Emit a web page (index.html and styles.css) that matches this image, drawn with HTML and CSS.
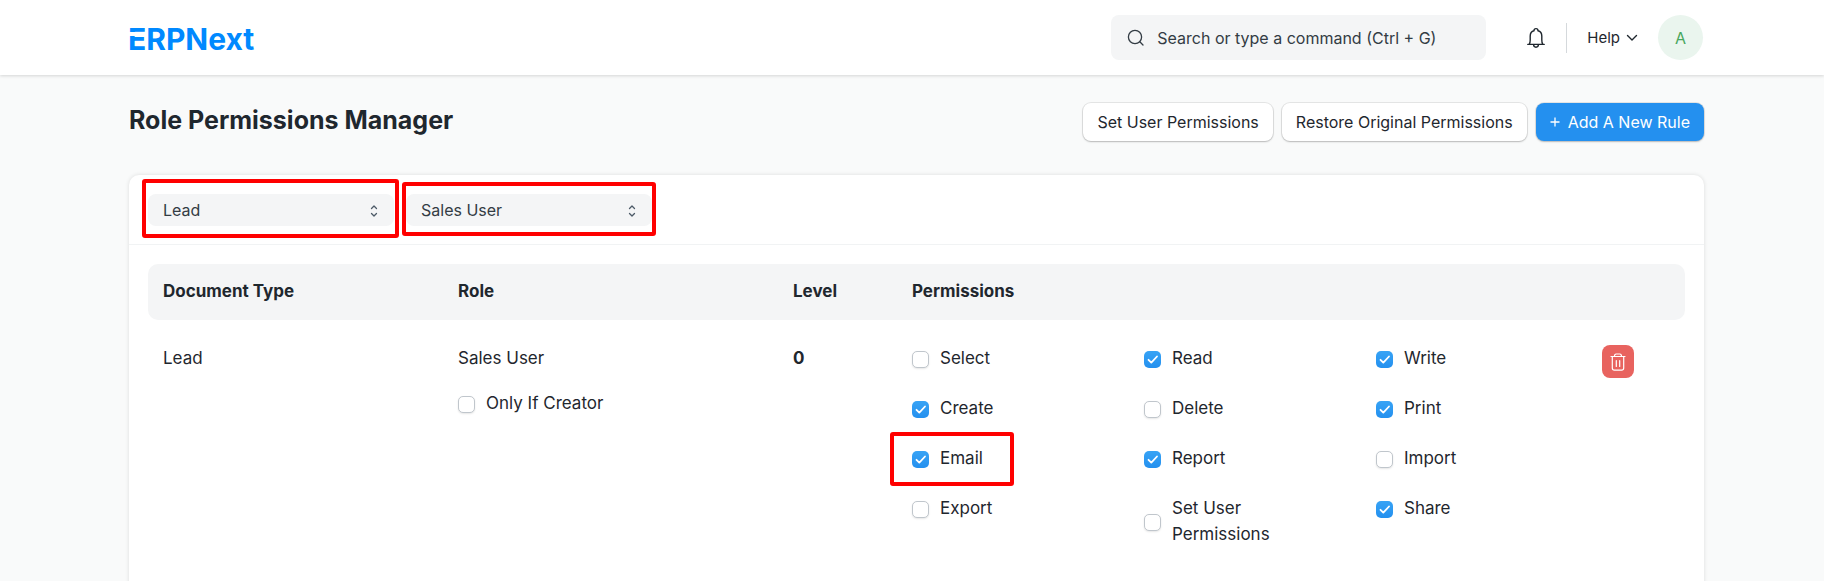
FILE: index.html
```html
<!DOCTYPE html>
<html lang="en">
<head>
    <meta charset="UTF-8">
    <meta name="viewport" content="width=device-width, initial-scale=1.0">
    <title>Role Permissions Manager</title>
    <link rel="stylesheet" href="styles.css">
</head>
<body>
    <header class="navbar">
        <a class="logo" href="#">ERPNext</a>

        <div class="navbar-right">
            <label class="search">
                <svg class="search-icon" viewBox="0 0 18 18" fill="none" stroke="currentColor" stroke-width="1.3" stroke-linecap="round">
                    <circle cx="8" cy="8" r="6.6"/>
                    <path d="M12.8 12.8L16 16"/>
                </svg>
                <input type="text" placeholder="Search or type a command (Ctrl + G)" aria-label="Search">
            </label>
            <button class="icon-button" aria-label="Notifications">
                <svg width="20" height="22" viewBox="0 0 20 22" fill="none" stroke="currentColor" stroke-width="1.4" stroke-linecap="round" stroke-linejoin="round">
                    <path d="M1.8 17.4H18.2M3.2 17.2C4 16.4 4.2 15 4.2 13V9C4.2 6.2 5.8 4.3 8 3.7C8 2.4 8.8 1.6 10 1.6S12 2.4 12 3.7C14.2 4.3 15.8 6.2 15.8 9V13C15.8 15 16 16.4 16.8 17.2"/>
                    <path d="M7.6 17.6C7.6 19.3 8.6 20.2 10 20.2S12.4 19.3 12.4 17.6"/>
                </svg>
            </button>
            <span class="divider"></span>
            <button class="help-button">
                Help
                <svg width="12" height="8" viewBox="0 0 12 8" fill="none" stroke="currentColor" stroke-width="1.4" stroke-linecap="round" stroke-linejoin="round">
                    <path d="M1.5 1.5L6 6L10.5 1.5"/>
                </svg>
            </button>
            <button class="avatar">A</button>
        </div>
    </header>

    <div class="page-head">
        <h1>Role Permissions Manager</h1>
        <div class="actions">
            <button class="btn">Set User Permissions</button>
            <button class="btn">Restore Original Permissions</button>
            <button class="btn btn-primary">
                <svg width="10" height="10" viewBox="0 0 10 10" fill="none" stroke="currentColor" stroke-width="1.3">
                    <path d="M5 0.5V9.5M0.5 5H9.5"/>
                </svg>
                Add A New Rule
            </button>
        </div>
    </div>

    <main class="card">
        <div class="filters">
            <div class="select-wrap marked">
                <select aria-label="Document Type">
                    <option>Lead</option>
                </select>
                <svg class="select-icon" viewBox="0 0 8 12" fill="none" stroke="currentColor" stroke-width="1.3" stroke-linecap="round" stroke-linejoin="round">
                    <path d="M1.5 3.5L4 1L6.5 3.5M1.5 8.5L4 11L6.5 8.5"/>
                </svg>
            </div>
            <div class="select-wrap marked marked-tight">
                <select aria-label="Role">
                    <option>Sales User</option>
                </select>
                <svg class="select-icon" viewBox="0 0 8 12" fill="none" stroke="currentColor" stroke-width="1.3" stroke-linecap="round" stroke-linejoin="round">
                    <path d="M1.5 3.5L4 1L6.5 3.5M1.5 8.5L4 11L6.5 8.5"/>
                </svg>
            </div>
        </div>

        <div class="table-area">
            <table class="rules">
                <colgroup>
                    <col class="col-doctype">
                    <col class="col-role">
                    <col class="col-level">
                    <col>
                    <col class="col-delete">
                </colgroup>
                <thead>
                    <tr>
                        <th>Document Type</th>
                        <th>Role</th>
                        <th>Level</th>
                        <th>Permissions</th>
                        <th></th>
                    </tr>
                </thead>
                <tbody>
                    <tr>
                        <td>Lead</td>
                        <td>
                            Sales User
                            <label class="check only-creator"><input type="checkbox"><span>Only If Creator</span></label>
                        </td>
                        <td class="level">0</td>
                        <td>
                            <div class="permissions">
                                <label class="check"><input type="checkbox"><span>Select</span></label>
                                <label class="check"><input type="checkbox" checked><span>Read</span></label>
                                <label class="check"><input type="checkbox" checked><span>Write</span></label>
                                <label class="check"><input type="checkbox" checked><span>Create</span></label>
                                <label class="check"><input type="checkbox"><span>Delete</span></label>
                                <label class="check"><input type="checkbox" checked><span>Print</span></label>
                                <label class="check marked"><input type="checkbox" checked><span>Email</span></label>
                                <label class="check"><input type="checkbox" checked><span>Report</span></label>
                                <label class="check"><input type="checkbox"><span>Import</span></label>
                                <label class="check"><input type="checkbox"><span>Export</span></label>
                                <label class="check"><input type="checkbox"><span>Set User Permissions</span></label>
                                <label class="check"><input type="checkbox" checked><span>Share</span></label>
                            </div>
                        </td>
                        <td>
                            <button class="delete-button" aria-label="Delete rule">
                                <svg width="16" height="18" viewBox="0 0 16 18" fill="none" stroke="currentColor" stroke-width="1.2" stroke-linecap="round" stroke-linejoin="round">
                                    <path d="M1 3.5H15M2.3 3.5V15C2.3 16.4 3 17.2 4.4 17.2H11.6C13 17.2 13.7 16.4 13.7 15V3.5M4.5 3.3C4.5 1.6 5 1 6.2 1H9.8C11 1 11.5 1.6 11.5 3.3M6.3 7.5V13.5M9.7 7.5V13.5"/>
                                </svg>
                            </button>
                        </td>
                    </tr>
                </tbody>
            </table>
        </div>
    </main>
</body>
</html>
```
FILE: styles.css
```css
* {
    box-sizing: border-box;
}

body {
    margin: 0;
    min-height: 100vh;
    display: flex;
    flex-direction: column;
    font-family: Inter, "Liberation Sans", sans-serif;
    font-size: 16px;
    color: #1f272e;
    background-color: #f9fafa;
}

button,
input,
select {
    font: inherit;
    color: inherit;
}

button {
    border: none;
    background: none;
    padding: 0;
    cursor: pointer;
}

.navbar {
    display: flex;
    align-items: center;
    justify-content: space-between;
    height: 75px;
    padding: 0 121px 0 128px;
    background-color: #fff;
    box-shadow: 0 1px 3px rgba(0, 0, 0, 0.15);
}

.logo {
    position: relative;
    font-size: 30px;
    line-height: 36px;
    padding-top: 3px;
    font-weight: 700;
    color: #0089ff;
    text-decoration: none;
}

/* gap between the top bar and the rest of the E */
.logo::after {
    content: "";
    position: absolute;
    left: 0;
    top: 14px;
    width: 17px;
    height: 4px;
    background-color: #fff;
}

.navbar-right {
    display: flex;
    align-items: center;
}

.search {
    display: flex;
    align-items: center;
    gap: 12px;
    width: 375px;
    height: 45px;
    padding: 0 16px;
    border-radius: 8px;
    background-color: #f4f5f6;
    color: #333c44;
}

.search-icon {
    flex: none;
    width: 18px;
    height: 18px;
}

.search input {
    flex: 1;
    min-width: 0;
    padding: 0;
    border: none;
    outline: none;
    background: none;
}

.search input::placeholder {
    color: #333c44;
    opacity: 1;
}

.icon-button {
    display: flex;
    margin-left: 40px;
}

.divider {
    width: 1px;
    height: 30px;
    margin: 0 20px;
    background-color: #d5d9dc;
}

.help-button {
    display: flex;
    align-items: center;
    gap: 6px;
    font-size: 15px;
}

.avatar {
    width: 45px;
    height: 45px;
    margin-left: 20px;
    border-radius: 50%;
    background-color: #eaf5ee;
    color: #48a75d;
}

.page-head {
    display: flex;
    align-items: center;
    justify-content: space-between;
    height: 93px;
    padding: 0 120px 0 129px;
}

h1 {
    margin: 0;
    padding-bottom: 4px;
    font-size: 25px;
    font-weight: 700;
}

.actions {
    display: flex;
    gap: 9px;
}

.btn {
    display: flex;
    align-items: center;
    gap: 8px;
    height: 38px;
    padding: 0 14px;
    border-radius: 8px;
    background-color: #fff;
    box-shadow: 0 0 0 1px rgba(0, 0, 0, 0.08), 0 1px 2px rgba(0, 0, 0, 0.2);
}

.btn-primary {
    background-color: #2490ef;
    color: #fff;
}

.card {
    flex: 1;
    margin: 7px 120px 0 129px;
    border-radius: 10px 10px 0 0;
    background-color: #fff;
    box-shadow: 0 0 4px rgba(0, 0, 0, 0.12);
}

.filters {
    display: flex;
    gap: 12px;
    padding: 19px 19px 18px;
    border-bottom: 1px solid #f1f3f4;
}

.select-wrap {
    position: relative;
    width: 246px;
}

.select-wrap select {
    display: block;
    width: 100%;
    height: 32px;
    padding: 0 15px;
    appearance: none;
    border: none;
    border-radius: 8px;
    background-color: #f4f5f6;
    color: #333c44;
}

.select-icon {
    position: absolute;
    right: 16px;
    top: 11px;
    width: 8px;
    height: 12px;
    color: #4c5a67;
    pointer-events: none;
}

/* red highlight frames */
.marked {
    position: relative;
}

.marked::after {
    content: "";
    position: absolute;
    inset: -15px -5px -12px -6px;
    border: 4px solid #f00;
    border-radius: 3px;
    pointer-events: none;
}

.marked-tight::after {
    inset: -12px -4px -10px -4px;
}

.table-area {
    padding: 19px;
}

.rules {
    width: 100%;
    table-layout: fixed;
    border-collapse: collapse;
    font-size: 17px;
    line-height: 26px;
}

.col-doctype {
    width: 295px;
}

.col-role {
    width: 335px;
}

.col-level {
    width: 119px;
}

.col-delete {
    width: 98px;
}

th {
    height: 56px;
    padding: 0 15px 2px;
    text-align: left;
    font-weight: 700;
    background-color: #f4f5f6;
}

th:first-child {
    border-radius: 10px 0 0 10px;
}

th:last-child {
    border-radius: 0 10px 10px 0;
}

td {
    padding: 25px 15px;
    vertical-align: top;
}

.level {
    font-weight: 700;
}

.permissions {
    display: grid;
    grid-template-columns: 1fr 1fr 1fr;
    gap: 24px 30px;
    align-items: start;
    margin-right: -6px;
}

.check {
    display: flex;
    align-items: center;
    justify-self: start;
    gap: 11px;
}

.check span {
    max-width: 160px;
}

.check input {
    flex: none;
    appearance: none;
    width: 17px;
    height: 17px;
    margin: 2px 0 0;
    border: 1px solid #c0c6cc;
    border-radius: 5px;
    background-color: #fff;
    box-shadow: 0 1px 2px rgba(0, 0, 0, 0.1);
}

.check input:checked {
    border: none;
    background: url("data:image/svg+xml,%3Csvg xmlns='http://www.w3.org/2000/svg' viewBox='0 0 17 17'%3E%3Cpath d='M4.5 8.8L7.3 11.6L13 5.5' fill='none' stroke='white' stroke-width='1.8' stroke-linecap='round' stroke-linejoin='round'/%3E%3C/svg%3E"), linear-gradient(#37a3f5, #2490ef);
    box-shadow: none;
}

.only-creator {
    margin-top: 19px;
}

.permissions .marked::after {
    inset: -13px -31px -15px -22px;
}

.delete-button {
    display: flex;
    align-items: center;
    justify-content: center;
    width: 32px;
    height: 33px;
    border-radius: 8px;
    background-color: #e8635f;
    color: #fff;
}
```
